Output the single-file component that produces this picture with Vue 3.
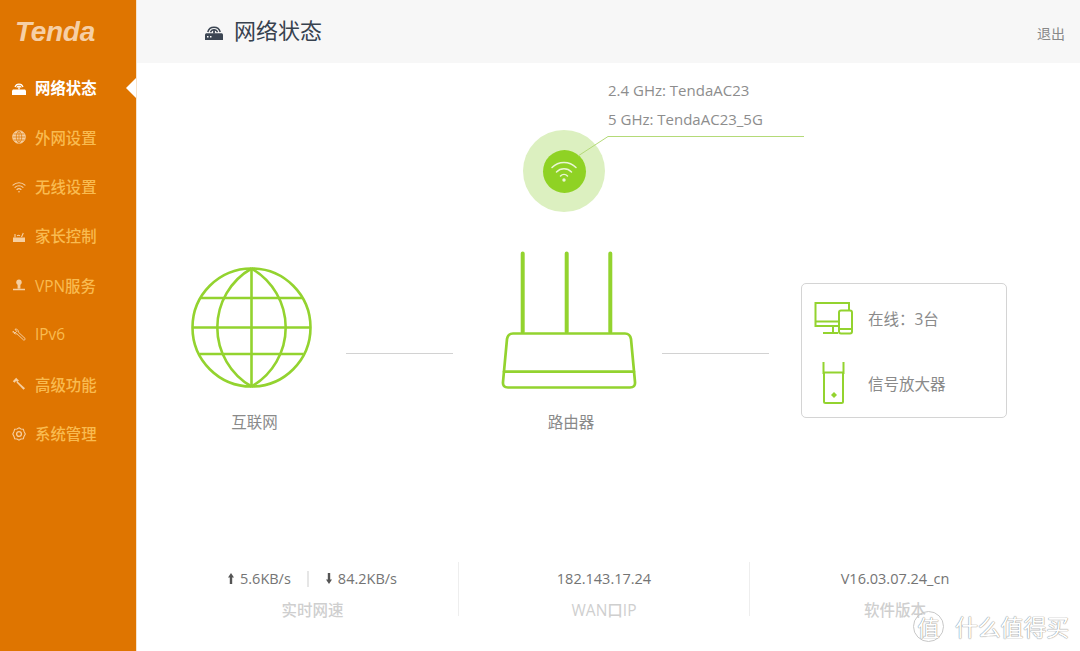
<script setup>
const menu = [
  { name: '网络状态', icon: 'router', active: true },
  { name: '外网设置', icon: 'globe' },
  { name: '无线设置', icon: 'wifi' },
  { name: '家长控制', icon: 'parent' },
  { name: 'VPN服务', icon: 'vpn' },
  { name: 'IPv6', icon: 'wrench' },
  { name: '高级功能', icon: 'tool' },
  { name: '系统管理', icon: 'gear' },
];
</script>

<template>
  <div class="page">
    <aside class="sidebar">
      <div class="logo">Tenda</div>
      <nav class="menu">
        <div v-for="item in menu" :key="item.name" class="menu-item" :class="{ active: item.active }">
          <svg class="menu-icon" viewBox="0 0 14 14">
            <g v-if="item.icon === 'router'">
              <path d="M3 6a4.200 4.200 0 0 1 8 0M4.800 6.600a2.400 2.400 0 0 1 4.400 0" fill="none" stroke="currentColor" stroke-width="1.200" />
              <rect x="6.300" y="5" width="1.400" height="3.500" fill="currentColor" />
              <path d="M1 8.500h12l1 1V14H0V9.500z" fill="currentColor" />
            </g>
            <g v-else-if="item.icon === 'globe'" fill="none" stroke="currentColor">
              <circle cx="7" cy="7" r="6.300" fill="currentColor" />
              <path d="M7 .7v12.600M.7 7h12.600M1.800 4h10.400M1.800 10h10.400M7 .7C3.400 3.500 3.400 10.500 7 13.300M7 .7c3.600 2.800 3.600 9.800 0 12.600" stroke="#df7500" stroke-width=".7" />
            </g>
            <g v-else-if="item.icon === 'wifi'" fill="none" stroke="currentColor" stroke-width="1.100" stroke-linecap="round">
              <path d="M1 5.200a8.600 8.600 0 0 1 12 0M3 7.400a5.700 5.700 0 0 1 8 0M5 9.500a2.800 2.800 0 0 1 4 0" />
              <circle cx="7" cy="11.700" r=".8" fill="currentColor" stroke="none" />
            </g>
            <g v-else-if="item.icon === 'parent'">
              <path d="M1 8.500h12V13H1z" fill="currentColor" />
              <path d="M3 8.500V5M9.500 8l1.800-4M5 6.800a2.500 2.500 0 0 1 3 0" fill="none" stroke="currentColor" stroke-width="1.100" />
            </g>
            <g v-else-if="item.icon === 'vpn'" fill="currentColor">
              <circle cx="7" cy="4.200" r="2.700" />
              <path d="M5.600 6h2.800v4.500H5.600zM1 10.800h12V12.200H1z" />
            </g>
            <g v-else-if="item.icon === 'wrench'" fill="none" stroke="currentColor" stroke-width="1">
              <path d="M1 3.200 3 5l1.700-1.600L3 1.200c1.800-.6 3.600.8 3.300 2.900l6.800 6.400c.5.600-.7 2-1.500 1.500L5 5.800C3 6.300.6 5 1 3.200z" />
            </g>
            <g v-else-if="item.icon === 'tool'" fill="currentColor">
              <path d="M.8 4.200 4.200.8 5.800 2.400 7 3.200 5.300 5 4 4 2.700 5.700z" />
              <path d="M5.300 4.200 13 11.200l-1.500 1.600-7-7.400z" />
            </g>
            <g v-else fill="none" stroke="currentColor">
              <path d="M7 .8 9 2l2.300.2L12 4.400 13.300 7 12 9.400l-.7 2.300L9 12 7 13.200 5 12l-2.300-.3L2 9.400.8 7 2 4.400l.7-2.200L5 2z" stroke-width="1.100" />
              <circle cx="7" cy="7" r="2.400" stroke-width="1.300" />
            </g>
          </svg>
          <span>{{ item.name }}</span>
        </div>
      </nav>
    </aside>

    <main class="content">
      <header class="topbar">
        <svg class="title-icon" viewBox="0 0 18 17">
          <path d="M2.800 9a6.400 6.400 0 0 1 12.400 0M5.500 9.300a3.700 3.700 0 0 1 7 0" fill="none" stroke="#3c4653" stroke-width="1.500" />
          <rect x="8.100" y="6.500" width="1.800" height="4" fill="#3c4653" />
          <path d="M1 10.200h16l1 1V17H0v-5.800z" fill="#3c4653" />
          <rect x="2" y="13" width="1.500" height="1.500" fill="#fff" />
          <rect x="5" y="13" width="1.500" height="1.500" fill="#fff" />
        </svg>
        <h1>网络状态</h1>
        <a class="logout">退出</a>
      </header>

      <section class="wifi-area">
        <div class="wifi-dot">
          <div class="wifi-inner">
            <svg viewBox="0 0 30 24" width="30" height="24">
              <g fill="none" stroke="#eaf6d5" stroke-width="1.500" stroke-linecap="round">
                <path d="M3 8.500a17 17 0 0 1 24 0M7.500 13a10.500 10.500 0 0 1 15 0M11.500 17a5 5 0 0 1 7 0" />
              </g>
              <circle cx="15" cy="21" r="1.700" fill="#eaf6d5" />
            </svg>
          </div>
        </div>
        <svg class="wifi-leader" viewBox="0 0 230 22" width="230" height="22">
          <path d="M3 21 33 1.500h196" fill="none" stroke="#b4da78" stroke-width="1" />
        </svg>
        <div class="ssid">
          <p>2.4 GHz: TendaAC23</p>
          <p>5 GHz: TendaAC23_5G</p>
        </div>
      </section>

      <section class="topology">
        <div class="node node-net">
          <svg viewBox="0 0 121 121" width="121" height="121">
            <g fill="none" stroke="#93d32f" stroke-width="2.600">
              <circle cx="60.500" cy="60.500" r="59" />
              <path d="M60.500 2v117M2 60.500h117M9.500 31h102M8.500 87h104" />
              <path d="M60.500 1.500A68 68 0 0 0 60.500 119.500M60.500 1.500A68 68 0 0 1 60.500 119.500" />
            </g>
          </svg>
          <span class="node-name">互联网</span>
        </div>
        <div class="link link-a"></div>
        <div class="node node-router">
          <svg viewBox="0 0 136 138" width="136" height="138">
            <g fill="none" stroke="#93d32f" stroke-linecap="round">
              <path d="M21.700 2.500V81M65.700 2.500V81M109.300 2.500V81" stroke-width="4" />
              <path d="M12 82.500H124Q129 82.500 130 88L134 131Q134.500 136.500 129 136.500H7Q1.500 136.500 2 131L6 88Q7 82.500 12 82.500Z" stroke-width="2.700" />
              <path d="M3 120.700H133" stroke-width="2.700" />
            </g>
          </svg>
          <span class="node-name">路由器</span>
        </div>
        <div class="link link-b"></div>
        <div class="clients">
          <div class="client-row">
            <svg viewBox="0 0 40 34" width="40" height="34">
              <g fill="none" stroke="#93d32f" stroke-width="2">
                <path d="M24 25H1.500V2H35v7M1.500 20.500H24M19 25v6M9 32h15" />
                <rect x="25" y="9.500" width="13" height="23" rx="2" fill="#fff" />
                <path d="M25 28h13" />
              </g>
            </svg>
            <span>在线：3台</span>
          </div>
          <div class="client-row">
            <svg viewBox="0 0 40 44" width="40" height="44">
              <g fill="none" stroke="#93d32f" stroke-width="2">
                <path d="M9.500 1v12M29.500 1v12" />
                <path d="M10 11.500h19v29a1.500 1.500 0 0 1-1.500 1.500h-16a1.500 1.500 0 0 1-1.500-1.500z" />
              </g>
              <path d="M20 31l3 3-3 3-3-3z" fill="#93d32f" />
            </svg>
            <span>信号放大器</span>
          </div>
        </div>
      </section>

      <section class="stats">
        <div class="stat">
          <div class="stat-value">
            <svg class="arrow" viewBox="0 0 6 11"><path d="M3 0l3 4.500H4.200V11H1.800V4.500H0z" fill="#555" /></svg>
            <span>5.6KB/s</span>
            <i class="pipe"></i>
            <svg class="arrow" viewBox="0 0 6 11"><path d="M3 11l3-4.500H4.200V0H1.800v6.500H0z" fill="#555" /></svg>
            <span>84.2KB/s</span>
          </div>
          <div class="stat-label">实时网速</div>
        </div>
        <div class="stat">
          <div class="stat-value">182.143.17.24</div>
          <div class="stat-label">WAN口IP</div>
        </div>
        <div class="stat">
          <div class="stat-value">V16.03.07.24_cn</div>
          <div class="stat-label">软件版本</div>
        </div>
      </section>

      <div class="watermark">
        <span class="wm-seal">值</span>
        <span class="wm-text">什么值得买</span>
      </div>
    </main>
  </div>
</template>

<style>
html, body {
  margin: 0;
  background: #fff;
}
</style>

<style scoped>
.page {
  display: flex;
  width: 1080px;
  height: 651px;
  overflow: hidden;
  font-family: "Open Sans", "Noto Sans CJK SC", sans-serif;
}

.sidebar {
  position: relative;
  z-index: 1;
  flex: none;
  width: 136px;
  background: #df7500;
  box-shadow: 1px 0 0 #f6e3cc;
}

.logo {
  height: 63px;
  padding-left: 15px;
  box-sizing: border-box;
  font: italic bold 28px/63px "Liberation Sans", sans-serif;
  letter-spacing: -.3px;
  color: #f6cfa5;
}

.menu {
  display: flex;
  flex-direction: column;
}

.menu-item {
  position: relative;
  display: flex;
  align-items: center;
  height: 49.430px;
  padding-left: 12px;
  font-size: 15.400px;
  font-weight: 500;
  color: #f9bb50;
}

.menu-item.active {
  color: #fff;
  font-weight: 700;
}

/* white notch pointing at the current page */
.menu-item.active::after {
  content: "";
  position: absolute;
  right: 0;
  top: 15px;
  border: 10px solid transparent;
  border-right-color: #fff;
  border-left-width: 0;
}

.menu-icon {
  flex: none;
  width: 14px;
  height: 14px;
  margin-right: 9px;
  color: #f6cfa0;
}

.menu-item.active .menu-icon {
  color: #fff;
}

.content {
  position: relative;
  flex: 1;
  min-width: 0;
}

.topbar {
  display: flex;
  align-items: center;
  height: 63px;
  padding: 0 15px 6px 69px;
  box-sizing: border-box;
  background: #f7f7f7;
}

.title-icon {
  width: 18px;
  height: 17px;
  margin: 5px 11px 0 0;
}

.topbar h1 {
  margin: 0;
  font-size: 22px;
  font-weight: 400;
  color: #37424f;
}

.logout {
  margin: 8px 0 0 auto;
  font-size: 14px;
  color: #888;
}

.wifi-area {
  position: relative;
  height: 188px;
}

.wifi-dot {
  position: absolute;
  left: 387px;
  top: 67px;
  display: flex;
  align-items: center;
  justify-content: center;
  width: 82px;
  height: 82px;
  border-radius: 50%;
  background: #dcf0c0;
}

.wifi-inner {
  display: flex;
  align-items: center;
  justify-content: center;
  width: 43px;
  height: 43px;
  border-radius: 50%;
  background: #8fd224;
}

.wifi-leader {
  position: absolute;
  left: 439px;
  top: 72px;
}

.ssid {
  position: absolute;
  left: 472px;
  top: 13px;
  font-size: 15px;
  line-height: 29px;
  color: #8d8d8d;
}

.ssid p {
  margin: 0;
}

.topology {
  display: flex;
  align-items: flex-start;
  padding-left: 55px;
}

.node {
  display: flex;
  flex-direction: column;
  align-items: center;
}

.node svg {
  display: block;
}

.node-net {
  margin-top: 16px;
}

.node-router {
  margin-left: 48px;
}

.node-name {
  margin-top: 22px;
  font-size: 15.500px;
  line-height: 22px;
  color: #8a8a8a;
}

.node-net .node-name {
  margin-top: 23px;
  transform: translateX(3px);
}

.node-router .node-name {
  transform: translateX(2px);
}

.link {
  width: 107px;
  height: 1px;
  margin-top: 102px;
  background: #d2d2d2;
}

.link-a {
  margin-left: 34px;
}

.link-b {
  margin-left: 25px;
}

.clients {
  display: flex;
  flex-direction: column;
  justify-content: center;
  gap: 15px;
  width: 206px;
  height: 135px;
  margin: 32px 0 0 32px;
  padding-left: 12px;
  box-sizing: border-box;
  border: 1px solid #d4d4d4;
  border-radius: 5px;
}

.client-row {
  display: flex;
  align-items: center;
  gap: 14px;
  height: 50px;
  font-size: 15.500px;
  color: #8a8a8a;
}

.stats {
  display: grid;
  grid-template-columns: repeat(3, 291px);
  margin: 129px 0 0 31px;
}

.stat {
  height: 54px;
  text-align: center;
}

.stat + .stat {
  border-left: 1px solid #eeeeee;
}

.stat-value {
  display: flex;
  align-items: center;
  justify-content: center;
  height: 33px;
  margin-bottom: 1px;
  font-size: 14.500px;
  color: #747474;
}

.arrow {
  width: 6px;
  height: 11px;
  margin-right: 6px;
}

.pipe {
  width: 2px;
  height: 16px;
  margin: 0 17px 0 16px;
  background: #e6e6e6;
}

.stat-label {
  font-size: 15.500px;
  font-weight: 500;
  line-height: 28px;
  color: #cfcfcf;
}

.watermark {
  position: absolute;
  left: 777px;
  bottom: 8px;
  display: flex;
  align-items: center;
  gap: 11px;
  color: #fff;
  text-shadow: 0 0 1px #8a8a8a, 0 0 1px #8a8a8a;
}

.wm-seal {
  display: flex;
  align-items: center;
  justify-content: center;
  width: 29px;
  height: 29px;
  border: 1px solid #c8c8c8;
  border-radius: 50%;
  font-size: 22px;
}

.wm-text {
  font-size: 23px;
  letter-spacing: -.2px;
}
</style>
